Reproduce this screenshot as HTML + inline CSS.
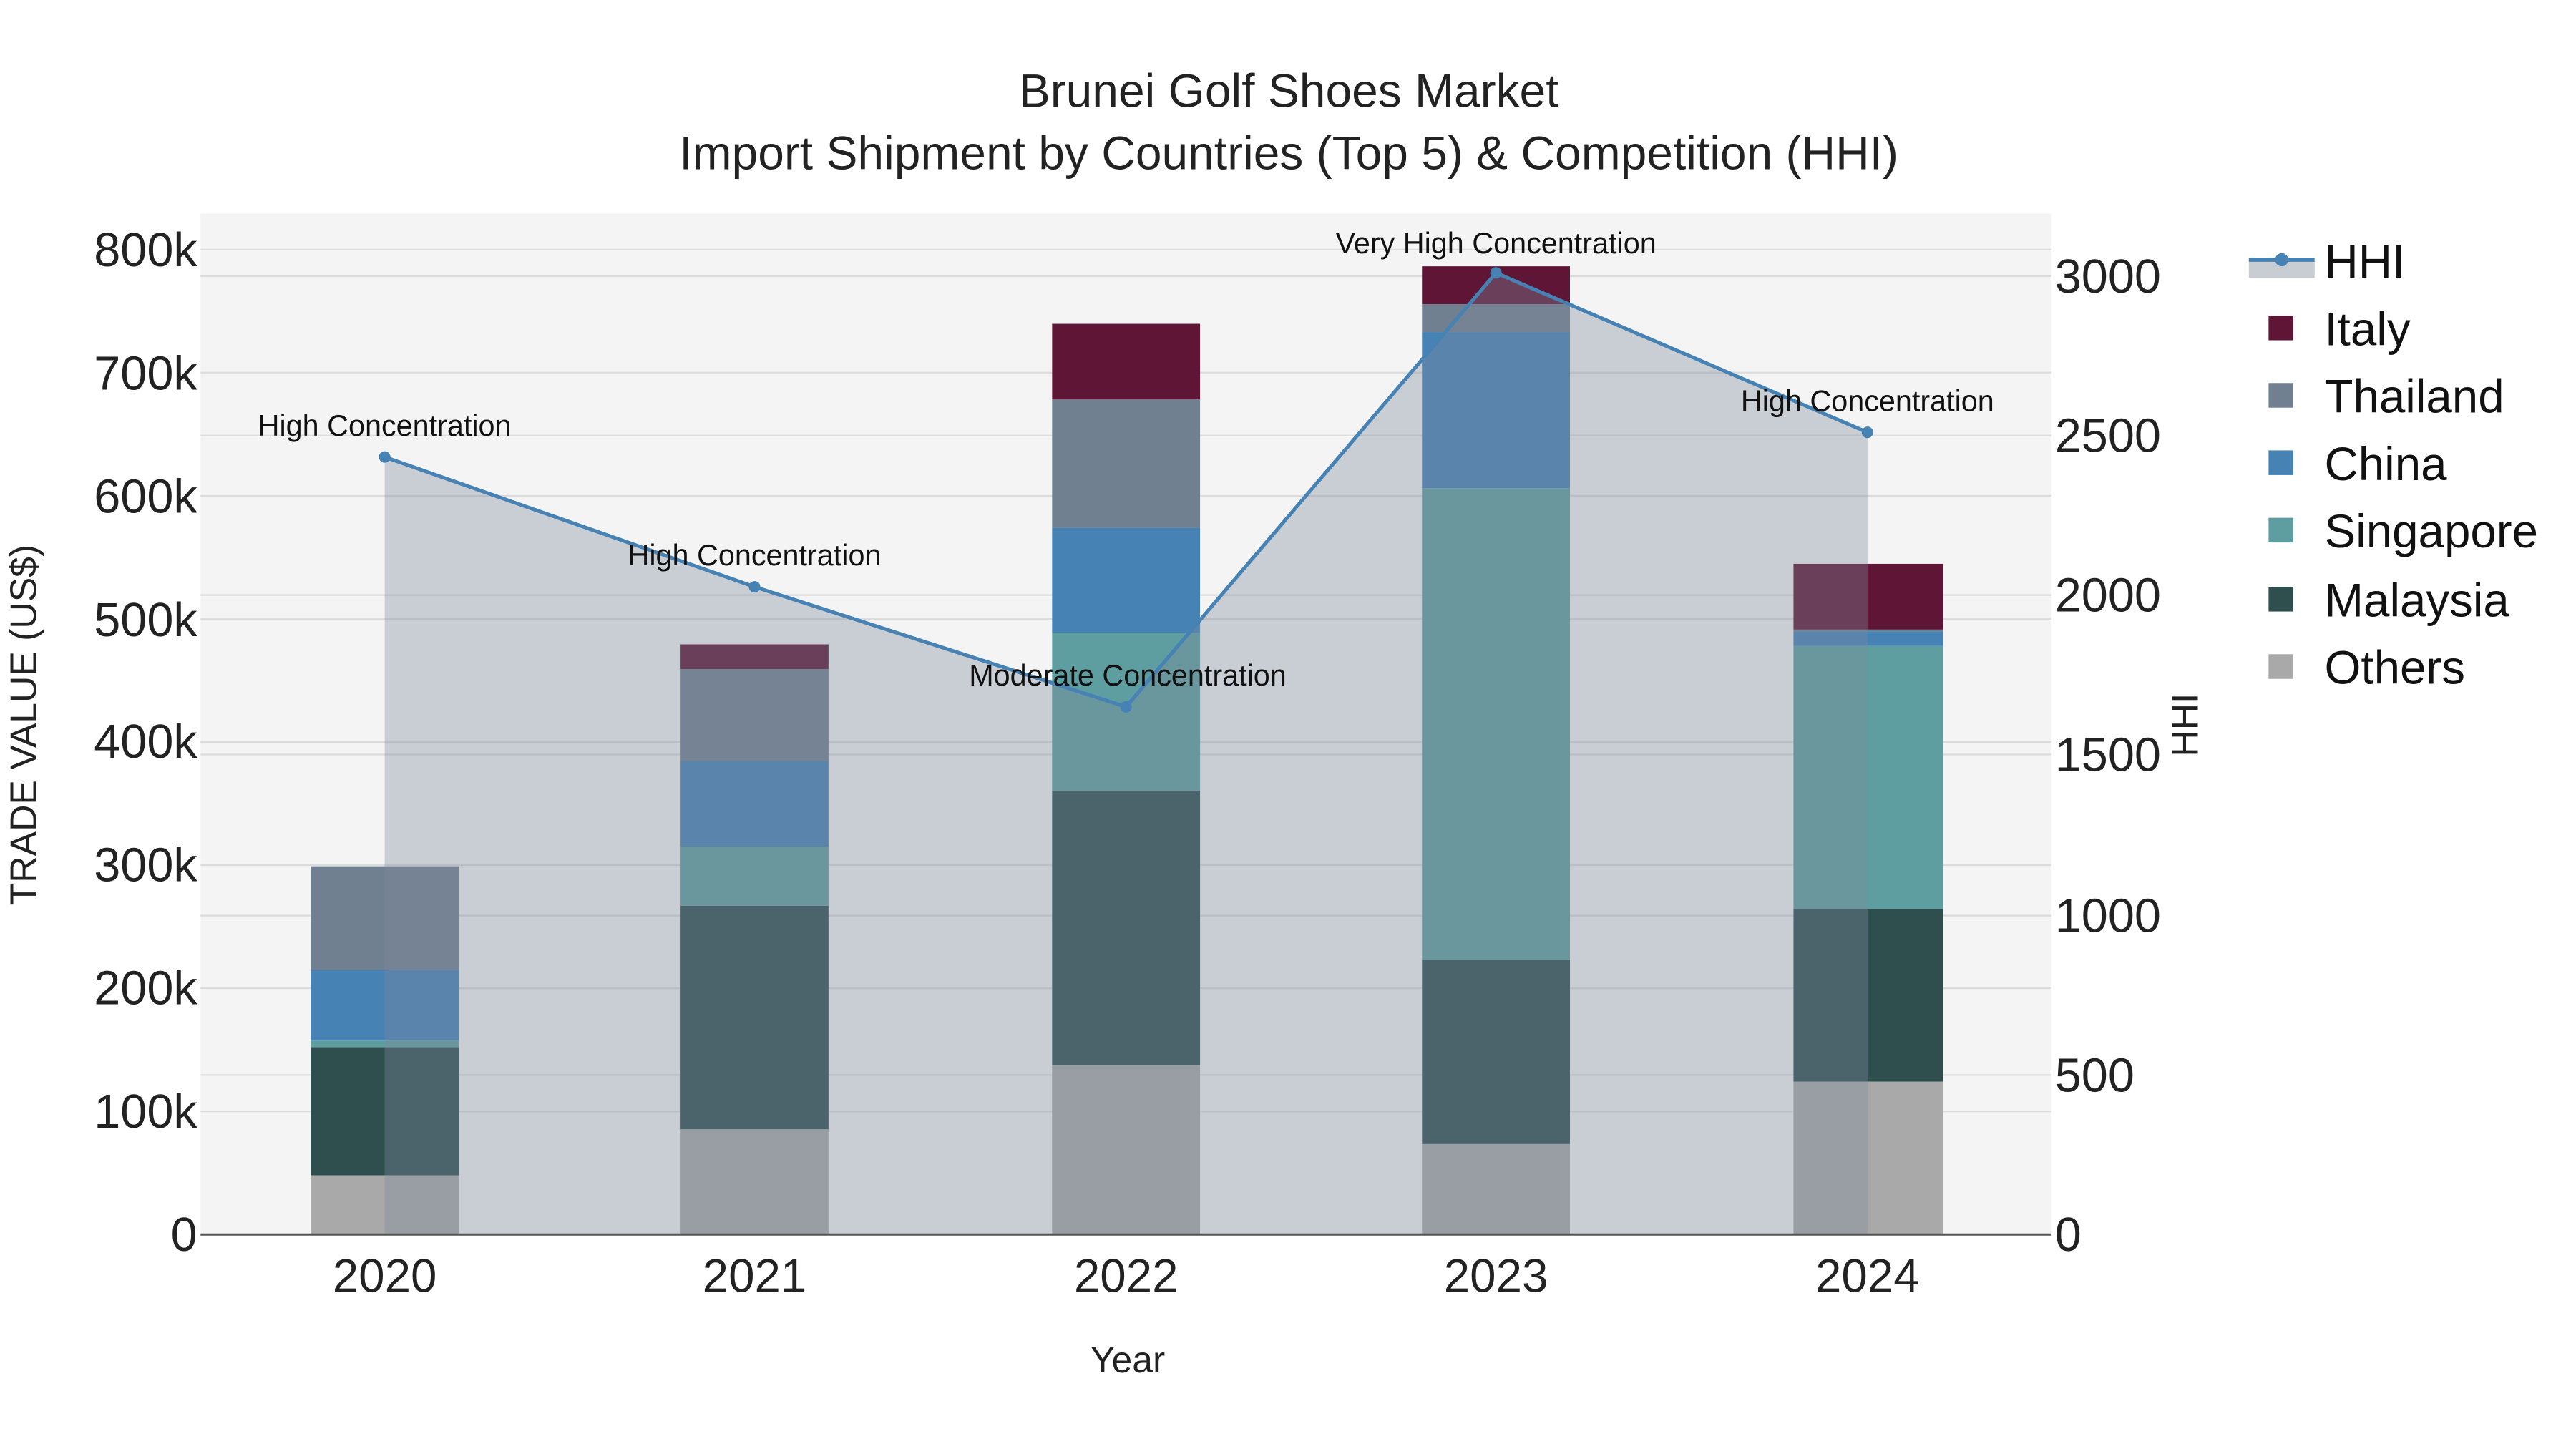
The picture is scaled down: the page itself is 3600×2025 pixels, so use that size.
<!DOCTYPE html>
<html><head><meta charset="utf-8"><style>html,body{margin:0;padding:0;background:#fff}svg{display:block}</style></head>
<body>
<svg width="3600" height="2025" viewBox="0 0 1567 881.5" preserveAspectRatio="none" xmlns="http://www.w3.org/2000/svg" font-family="Liberation Sans, sans-serif">
<rect x="0" y="0" width="1567" height="881.5" fill="#fff"/>
<rect x="122" y="130" width="1126" height="621" fill="#f4f4f4"/>
<g stroke="#dcdcdc" stroke-width="1">
<line x1="122" x2="1248" y1="676.1" y2="676.1"/>
<line x1="122" x2="1248" y1="601.2" y2="601.2"/>
<line x1="122" x2="1248" y1="526.3" y2="526.3"/>
<line x1="122" x2="1248" y1="451.4" y2="451.4"/>
<line x1="122" x2="1248" y1="376.5" y2="376.5"/>
<line x1="122" x2="1248" y1="301.6" y2="301.6"/>
<line x1="122" x2="1248" y1="226.7" y2="226.7"/>
<line x1="122" x2="1248" y1="151.8" y2="151.8"/>
<line x1="122" x2="1248" y1="654" y2="654"/>
<line x1="122" x2="1248" y1="557" y2="557"/>
<line x1="122" x2="1248" y1="459" y2="459"/>
<line x1="122" x2="1248" y1="362" y2="362"/>
<line x1="122" x2="1248" y1="265" y2="265"/>
<line x1="122" x2="1248" y1="168" y2="168"/>
</g>
<g>
<rect x="189" y="715" width="90" height="36" fill="#a9a9a9"/>
<rect x="189" y="637" width="90" height="78" fill="#2f4f4f"/>
<rect x="189" y="633" width="90" height="4" fill="#5f9ea0"/>
<rect x="189" y="590" width="90" height="43" fill="#4682b4"/>
<rect x="189" y="527" width="90" height="63" fill="#708090"/>
<rect x="414" y="687" width="90" height="64" fill="#a9a9a9"/>
<rect x="414" y="551" width="90" height="136" fill="#2f4f4f"/>
<rect x="414" y="515" width="90" height="36" fill="#5f9ea0"/>
<rect x="414" y="463" width="90" height="52" fill="#4682b4"/>
<rect x="414" y="407" width="90" height="56" fill="#708090"/>
<rect x="414" y="392" width="90" height="15" fill="#5f1535"/>
<rect x="640" y="648" width="90" height="103" fill="#a9a9a9"/>
<rect x="640" y="481" width="90" height="167" fill="#2f4f4f"/>
<rect x="640" y="385" width="90" height="96" fill="#5f9ea0"/>
<rect x="640" y="321" width="90" height="64" fill="#4682b4"/>
<rect x="640" y="243" width="90" height="78" fill="#708090"/>
<rect x="640" y="197" width="90" height="46" fill="#5f1535"/>
<rect x="865" y="696" width="90" height="55" fill="#a9a9a9"/>
<rect x="865" y="584" width="90" height="112" fill="#2f4f4f"/>
<rect x="865" y="297" width="90" height="287" fill="#5f9ea0"/>
<rect x="865" y="202" width="90" height="95" fill="#4682b4"/>
<rect x="865" y="185" width="90" height="17" fill="#708090"/>
<rect x="865" y="162" width="90" height="23" fill="#5f1535"/>
<rect x="1091" y="658" width="91" height="93" fill="#a9a9a9"/>
<rect x="1091" y="553" width="91" height="105" fill="#2f4f4f"/>
<rect x="1091" y="393" width="91" height="160" fill="#5f9ea0"/>
<rect x="1091" y="384" width="91" height="9" fill="#4682b4"/>
<rect x="1091" y="383" width="91" height="1" fill="#708090"/>
<rect x="1091" y="343" width="91" height="40" fill="#5f1535"/>
</g>
<polygon points="234,751 234,278 459,357 685,430 910,166 1136,263 1136,751" fill="rgb(125,136,155)" fill-opacity="0.365"/>
<line x1="122" x2="1248" y1="751" y2="751" stroke="#555" stroke-width="1.3"/>
<polyline points="234,278 459,357 685,430 910,166 1136,263" fill="none" stroke="#4682b4" stroke-width="2.2"/>
<g fill="#4682b4"><circle cx="234" cy="278" r="3.5"/><circle cx="459" cy="357" r="3.5"/><circle cx="685" cy="430" r="3.5"/><circle cx="910" cy="166" r="3.5"/><circle cx="1136" cy="263" r="3.5"/></g>
<g font-size="18" fill="#111" text-anchor="middle">
<text x="234" y="265">High Concentration</text>
<text x="459" y="344">High Concentration</text>
<text x="686" y="417">Moderate Concentration</text>
<text x="910" y="154">Very High Concentration</text>
<text x="1136" y="250">High Concentration</text>
</g>
<g font-size="28.7" fill="#222" text-anchor="middle">
<text x="784" y="65">Brunei Golf Shoes Market</text>
<text x="784" y="103">Import Shipment by Countries (Top 5) &amp; Competition (HHI)</text>
</g>
<g font-size="29" fill="#222" text-anchor="end">
<text x="120" y="761">0</text>
<text x="120" y="686">100k</text>
<text x="120" y="611">200k</text>
<text x="120" y="536">300k</text>
<text x="120" y="461">400k</text>
<text x="120" y="387">500k</text>
<text x="120" y="312">600k</text>
<text x="120" y="237">700k</text>
<text x="120" y="162">800k</text>
</g>
<g font-size="29" fill="#222">
<text x="1250" y="761">0</text>
<text x="1250" y="664">500</text>
<text x="1250" y="567">1000</text>
<text x="1250" y="469">1500</text>
<text x="1250" y="372">2000</text>
<text x="1250" y="275">2500</text>
<text x="1250" y="178">3000</text>
</g>
<g font-size="28.5" fill="#222" text-anchor="middle">
<text x="234" y="786">2020</text>
<text x="459" y="786">2021</text>
<text x="685" y="786">2022</text>
<text x="910" y="786">2023</text>
<text x="1136" y="786">2024</text>
</g>
<text x="686" y="835" font-size="22.5" fill="#222" text-anchor="middle">Year</text>
<text transform="translate(22,441) rotate(-90)" font-size="22.5" fill="#222" text-anchor="middle">TRADE VALUE (US$)</text>
<text transform="translate(1337,441) rotate(-90)" font-size="22.5" fill="#222" text-anchor="middle">HHI</text>
<rect x="1368" y="159" width="40" height="10" fill="#c8ccd3"/>
<line x1="1368" x2="1408" y1="158" y2="158" stroke="#4682b4" stroke-width="2.5"/>
<circle cx="1388" cy="158" r="4" fill="#4682b4"/>
<g font-size="28.5" fill="#111">
<text x="1414" y="169">HHI</text>
<text x="1414" y="210">Italy</text>
<text x="1414" y="251">Thailand</text>
<text x="1414" y="292">China</text>
<text x="1414" y="333">Singapore</text>
<text x="1414" y="375">Malaysia</text>
<text x="1414" y="416">Others</text>
</g>
<rect x="1380" y="192" width="15" height="15" fill="#5f1535"/>
<rect x="1380" y="233" width="15" height="15" fill="#708090"/>
<rect x="1380" y="274" width="15" height="15" fill="#4682b4"/>
<rect x="1380" y="315" width="15" height="15" fill="#5f9ea0"/>
<rect x="1380" y="357" width="15" height="15" fill="#2f4f4f"/>
<rect x="1380" y="398" width="15" height="15" fill="#a9a9a9"/>
</svg>
</body></html>
